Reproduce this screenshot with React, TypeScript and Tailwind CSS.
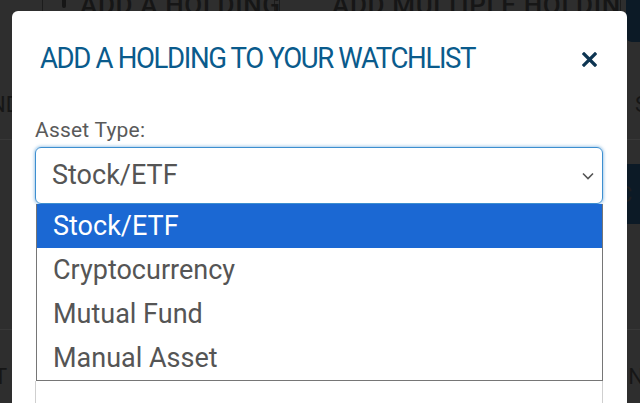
import React from "react";

const font = { fontFamily: "Roboto, 'Noto Sans', sans-serif" };

const options = ["Stock/ETF", "Cryptocurrency", "Mutual Fund", "Manual Asset"];

function PageBehind() {
  return (
    <div className="flex h-full w-full flex-col bg-[#2e2e2e] text-[#161616]" style={font}>
      <div className="flex h-[40px] items-start">
        <div className="h-full w-[43px] border-r border-[#1c1c1c]" />
        <div className="-mt-[14px] flex h-[54px] w-[232px] items-start gap-[14px] whitespace-nowrap border-r border-[#1c1c1c] pl-[19px] text-[26px] font-medium tracking-wide">
          <span className="mt-[4px] h-[18px] w-[12px] rounded-[2px] border-2 border-[#161616]" />
          <span>ADD A HOLDING</span>
        </div>
        <div className="-mt-[14px] ml-[4px] flex h-[54px] w-[342px] items-start gap-[14px] overflow-hidden whitespace-nowrap border-x border-[#1c1c1c] pl-[20px] text-[26px] font-medium tracking-wide">
          <span className="mt-[4px] flex flex-col gap-[2px]">
            <span className="mx-auto block h-[3px] w-[14px] bg-[#161616]" />
            <span className="block h-[3px] w-[18px] bg-[#161616]" />
          </span>
          <span>ADD MULTIPLE HOLDINGS</span>
        </div>
        <div className="ml-[5px] h-[42px] flex-1 rounded-bl-[6px] bg-[#0c1a26]" />
      </div>
      <div className="flex h-[100px] items-center justify-between border-b border-[#383838] pt-[30px] text-[22px]">
        <span className="-ml-[10px]">ND</span>
        <span className="-mr-[8px]">S</span>
      </div>
      <div className="mt-[24px] flex h-[60px] justify-end">
        <div className="flex w-[22px] items-center bg-[#0c1a26] text-[22px] text-[#1e1e1e]">C</div>
      </div>
      <div className="h-[106px] border-b border-[#383838]" />
      <div className="flex justify-between pt-[30px] text-[22px]">
        <span className="-ml-[6px]">T</span>
        <span className="-mr-[4px]">N</span>
      </div>
    </div>
  );
}

function CloseIcon() {
  return (
    <svg width="15" height="15" viewBox="0 0 15 15" className="mt-[11px]">
      <path d="M2 2 L13 13 M13 2 L2 13" stroke="#0d3552" strokeWidth="3.2" strokeLinecap="square" />
    </svg>
  );
}

function Chevron() {
  return (
    <svg width="12" height="8" viewBox="0 0 12 8">
      <path d="M1 1.5 L6 6.5 L11 1.5" fill="none" stroke="#555" strokeWidth="1.6" />
    </svg>
  );
}

function Modal() {
  return (
    <div className="absolute left-[12px] top-[11px] h-[430px] w-[615px] rounded-[6px] bg-white" style={font}>
      <div className="flex items-start justify-between pl-[28px] pr-[30px] pt-[30px]">
        <h2 className="origin-left scale-x-[0.92] whitespace-nowrap text-[30px] leading-[34px] tracking-[-0.05em] text-[#0a5b8c]">
          ADD A HOLDING TO YOUR WATCHLIST
        </h2>
        <CloseIcon />
      </div>
      <div className="px-[23px] pt-[43px]">
        <label className="block text-[21px] leading-[24px] tracking-[0.01em] text-[#5a5a5a]">Asset Type:</label>
        <div className="mt-[5px] flex h-[57px] w-[568px] items-center justify-between rounded-[6px] border border-[#3d8fd0] pl-[16px] pr-[8px] shadow-[0_0_3px_1px_rgba(61,143,208,0.45)]">
          <span className="text-[27px] text-[#555]">Stock/ETF</span>
          <Chevron />
        </div>
        <ul className="ml-[1px] w-[567px] border-x border-b border-[#767676] bg-white">
          {options.map((o, i) => (
            <li
              key={o}
              className={
                "flex h-[44px] items-center pl-[16px] text-[27px] " +
                (i === 0 ? "bg-[#1b68d3] text-white" : "text-[#555]")
              }
            >
              {o}
            </li>
          ))}
        </ul>
        <div className="h-[40px] w-[568px] border-x border-[#cfcfcf]" />
      </div>
    </div>
  );
}

export default function App() {
  return (
    <div className="relative h-[403px] w-[640px] overflow-hidden">
      <PageBehind />
      <Modal />
    </div>
  );
}
